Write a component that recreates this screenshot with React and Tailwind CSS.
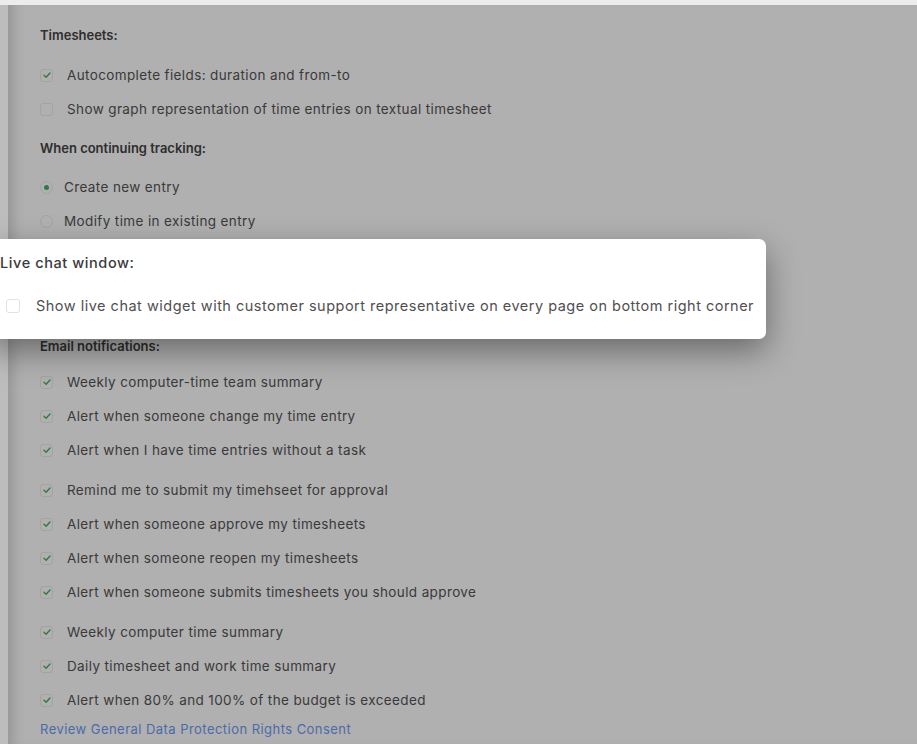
import React from 'react';

const font = { fontFamily: 'Inter, "Noto Sans", sans-serif' };

function Check({ checked }) {
  return (
    <span className="flex h-[13px] w-[13px] shrink-0 items-center justify-center rounded-[3px] border border-[#ececec] bg-white">
      {checked && (
        <svg viewBox="0 0 12 12" className="h-[10px] w-[10px]">
          <path d="M2.4 6.3 L4.9 8.6 L9.6 3.6" fill="none" stroke="#45b35c" strokeWidth="1.7" strokeLinecap="round" strokeLinejoin="round" />
        </svg>
      )}
    </span>
  );
}

function Radio({ on }) {
  return (
    <span className="flex h-[13px] w-[13px] shrink-0 items-center justify-center rounded-full border border-[#ececec] bg-white">
      {on && <span className="h-[5px] w-[5px] rounded-full bg-[#45b35c]" />}
    </span>
  );
}

function CheckRow({ checked, label, className = '' }) {
  return (
    <div className={`flex h-[34px] items-center gap-[14px] ${className}`}>
      <Check checked={checked} />
      <span className="text-[13.5px] tracking-[0.028em] text-[#555]">{label}</span>
    </div>
  );
}

function RadioRow({ on, label, className = '' }) {
  return (
    <div className={`flex h-[34px] items-center gap-[11px] ${className}`}>
      <Radio on={on} />
      <span className="text-[13.5px] tracking-[0.028em] text-[#555]">{label}</span>
    </div>
  );
}

function Heading({ children, className = '' }) {
  return (
    <div className={`h-[20px] text-[13px] leading-[20px] font-semibold text-[#444] ${className}`}>
      {children}
    </div>
  );
}

const emailFirst = [
  'Weekly computer-time team summary',
  'Alert when someone change my time entry',
  'Alert when I have time entries without a task',
];
const emailSecond = [
  'Remind me to submit my timehseet for approval',
  'Alert when someone approve my timesheets',
  'Alert when someone reopen my timesheets',
  'Alert when someone submits timesheets you should approve',
];
const emailThird = [
  'Weekly computer time summary',
  'Daily timesheet and work time summary',
  'Alert when 80% and 100% of the budget is exceeded',
];

export default function App() {
  return (
    <div className="flex h-[744px] w-[917px] flex-col overflow-hidden bg-[#ececec]" style={font}>
      <div className="h-[5px] shrink-0 bg-[#ececec]" />
      <div className="flex min-h-0 flex-1">
        <div className="w-[8px] shrink-0 bg-[#bdbdbd]" />
        <div className="relative flex-1 bg-white shadow-[inset_14px_0_14px_-10px_rgba(0,0,0,0.18)]">
          <div className="pl-[32px] pt-[20px]">
            <Heading className="mb-[13px]">Timesheets:</Heading>
            <CheckRow checked label="Autocomplete fields: duration and from-to" />
            <CheckRow label="Show graph representation of time entries on textual timesheet" />

            <Heading className="mb-[12px] mt-[12px]">When continuing tracking:</Heading>
            <RadioRow on label="Create new entry" />
            <RadioRow label="Modify time in existing entry" />

            {/* highlighted section sits above the dim layer */}
            <div className="relative z-10 mb-[-3px] ml-[-50px] mt-[1px] h-[100px] w-[776px] rounded-[7px] bg-white pl-[10px] pt-[14px] shadow-[0_12px_32px_rgba(0,0,0,0.4)]">
              <div className="h-[20px] text-[14.5px] leading-[20px] font-medium tracking-[0.04em] text-[#3a3a3a]">Live chat window:</div>
              <div className="mt-[23px] flex h-[20px] items-center gap-[16px] pl-[6px]">
                <span className="h-[14px] w-[14px] shrink-0 rounded-[3px] border border-[#e2e2e2] bg-white" />
                <span className="text-[14.5px] tracking-[0.034em] text-[#505050]">
                  Show live chat widget with customer support representative on every page on bottom right corner
                </span>
              </div>
            </div>

            <Heading className="mb-[9px]">Email notifications:</Heading>
            {emailFirst.map((t) => (
              <CheckRow key={t} checked label={t} />
            ))}
            <div className="h-[6px]" />
            {emailSecond.map((t) => (
              <CheckRow key={t} checked label={t} />
            ))}
            <div className="h-[6px]" />
            {emailThird.map((t) => (
              <CheckRow key={t} checked label={t} />
            ))}
            <div className="mt-[2px] h-[20px] text-[13px] leading-[20px] tracking-[0.035em] text-[#6b9cf5]">
              Review General Data Protection Rights Consent
            </div>
          </div>
          <div className="absolute inset-0 z-[1] bg-black/[0.31]" />
        </div>
      </div>
    </div>
  );
}
